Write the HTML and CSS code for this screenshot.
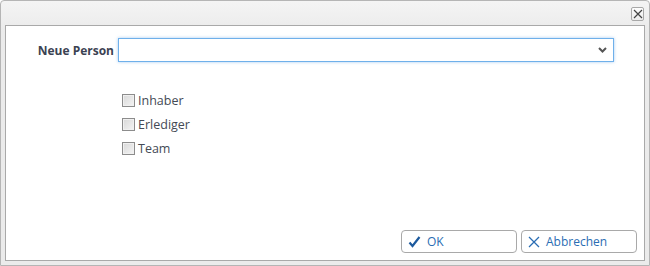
FILE: index.html
```html
<!DOCTYPE html>
<html lang="de">
<head>
    <meta charset="UTF-8">
    <title>Neue Person</title>
    <link rel="stylesheet" href="styles.css">
</head>
<body>
    <div class="dialog">
        <div class="dialog-titlebar">
            <button class="close-btn" title="Schließen">
                <svg width="10" height="10" viewBox="0 0 10 10" fill="none" stroke="#444" stroke-width="1.2">
                    <path d="M1 1l8 8M9 1l-8 8"/>
                </svg>
            </button>
        </div>

        <div class="dialog-body">
            <div class="form-row">
                <label class="form-label">Neue Person</label>
                <div class="select-box">
                    <svg class="chevron" width="9" height="6" viewBox="0 0 9 6" fill="none" stroke="#555" stroke-width="2">
                        <path d="M1 1l3.5 3.5L8 1"/>
                    </svg>
                </div>
            </div>

            <div class="check-list">
                <label class="check-item"><span class="check-box"></span>Inhaber</label>
                <label class="check-item"><span class="check-box"></span>Erlediger</label>
                <label class="check-item"><span class="check-box"></span>Team</label>
            </div>

            <div class="dialog-footer">
                <button class="btn">
                    <svg width="13" height="12" viewBox="0 0 13 12" fill="none" stroke="#1d5a9e" stroke-width="2.2">
                        <path d="M1.5 6.5l3 3.5L11.5 1"/>
                    </svg>
                    OK
                </button>
                <button class="btn">
                    <svg width="12" height="12" viewBox="0 0 12 12" fill="none" stroke="#2a6db3" stroke-width="1.3">
                        <path d="M1 1l10 10M11 1L1 11"/>
                    </svg>
                    Abbrechen
                </button>
            </div>
        </div>
    </div>
</body>
</html>
```

FILE: styles.css
```css
* {
    margin: 0;
    padding: 0;
    box-sizing: border-box;
    font-family: "Open Sans", "Liberation Sans", sans-serif;
}

body {
    background: #ffffff;
}

.dialog {
    width: 650px;
    height: 266px;
    border: 1px solid #b5b5b5;
    border-radius: 4px 4px 0 0;
    background: linear-gradient(#f4f4f4, #ebebeb 30px, #ebebeb);
    display: flex;
    flex-direction: column;
}

.dialog-titlebar {
    height: 23px;
    display: flex;
    justify-content: flex-end;
    align-items: flex-start;
    padding: 6px 5px 0 0;
}

.close-btn {
    width: 13px;
    height: 14px;
    border: 1px solid #a8a8a8;
    border-radius: 2px;
    background: linear-gradient(#fdfdfd, #ececec);
    display: flex;
    align-items: center;
    justify-content: center;
}

.dialog-body {
    flex: 1;
    margin: 1px 4px 4px 4px;
    border: 1px solid #a9a9a9;
    background: #ffffff;
    display: flex;
    flex-direction: column;
    padding: 12px 30px 7px 0;
}

.form-row {
    display: flex;
    align-items: center;
}

.form-label {
    width: 112px;
    padding-right: 4px;
    text-align: right;
    font-size: 12px;
    font-weight: 700;
    color: #3b4252;
}

.select-box {
    flex: 1;
    height: 24px;
    border: 1px solid #6fb0ea;
    box-shadow: 0 0 3px rgba(92, 160, 230, 0.55);
    display: flex;
    align-items: center;
    justify-content: flex-end;
    padding-right: 6px;
}

.check-list {
    margin-top: 26px;
    padding-left: 116px;
    display: flex;
    flex-direction: column;
}

.check-item {
    height: 24px;
    display: flex;
    align-items: center;
    gap: 3px;
    font-size: 12.5px;
    color: #444a55;
}

.check-box {
    width: 13px;
    height: 13px;
    border: 1px solid #8c8c8c;
    background: linear-gradient(135deg, #d8d8d8, #f4f4f4);
    box-shadow: inset 0 0 0 1px #f0f0f0;
}

.dialog-footer {
    margin-top: auto;
    margin-right: -23px;
    display: flex;
    justify-content: flex-end;
    gap: 4px;
}

.btn {
    width: 116px;
    height: 23px;
    border: 1px solid #a9a9a9;
    border-radius: 4px;
    background: #ffffff;
    display: flex;
    align-items: center;
    gap: 6px;
    padding-left: 6px;
    font-size: 12px;
    color: #2a6db3;
}
```
